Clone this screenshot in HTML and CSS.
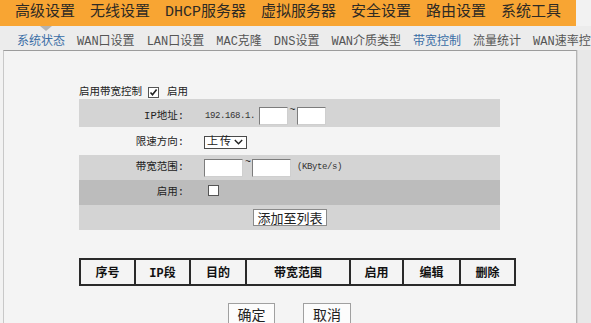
FILE: index.html
```html
<!DOCTYPE html>
<html>

<head>
	<meta charset="utf-8">
	<title>带宽控制</title>
	<link rel="stylesheet" href="styles.css">
</head>

<body>
	<nav class="topnav">
		<span class="topnav-item active">高级设置</span>
		<span class="topnav-item">无线设置</span>
		<span class="topnav-item">DHCP服务器</span>
		<span class="topnav-item">虚拟服务器</span>
		<span class="topnav-item">安全设置</span>
		<span class="topnav-item">路由设置</span>
		<span class="topnav-item">系统工具</span>
	</nav>

	<nav class="subnav">
		<span class="subnav-item active">系统状态</span>
		<span class="subnav-item">WAN口设置</span>
		<span class="subnav-item">LAN口设置</span>
		<span class="subnav-item">MAC克隆</span>
		<span class="subnav-item">DNS设置</span>
		<span class="subnav-item">WAN介质类型</span>
		<span class="subnav-item active">带宽控制</span>
		<span class="subnav-item">流量统计</span>
		<span class="subnav-item">WAN速率控</span>
	</nav>

	<div class="main">
		<div class="panel">
			<div class="form">
				<div class="enable-line">
					<span>启用带宽控制</span>
					<svg class="checkbox" width="11" height="11" viewBox="0 0 11 11">
						<rect x="0.5" y="0.5" width="10" height="10" fill="#fff" stroke="#555" />
						<path d="M2.5 5.5 L4.5 7.8 L8.6 2.6" fill="none" stroke="#222" stroke-width="1.6" />
					</svg>
					<span class="enable-text">启用</span>
				</div>

				<div class="row row-gray row-ip">
					<div class="row-label">IP地址:</div>
					<div class="row-value">
						<span class="mini-text ip-prefix">192.168.1.</span>
						<input class="text-input ip-input" type="text">
						<span class="tilde">~</span>
						<input class="text-input ip-input" type="text">
					</div>
				</div>

				<div class="row row-dir">
					<div class="row-label">限速方向:</div>
					<div class="row-value">
						<div class="select">
							<span class="select-text">上传</span>
							<svg width="9" height="6" viewBox="0 0 9 6">
								<path d="M0.8 1 L4.5 4.8 L8.2 1" fill="none" stroke="#222" stroke-width="1.4" />
							</svg>
						</div>
					</div>
				</div>

				<div class="row row-gray row-bw">
					<div class="row-label">带宽范围:</div>
					<div class="row-value">
						<input class="text-input bw-input" type="text">
						<span class="tilde">~</span>
						<input class="text-input bw-input" type="text">
						<span class="mini-text unit">(KByte/s)</span>
					</div>
				</div>

				<div class="row row-dark row-en">
					<div class="row-label">启用:</div>
					<div class="row-value">
						<span class="empty-box"></span>
					</div>
				</div>

				<div class="row row-gray row-add">
					<button class="add-button">添加至列表</button>
				</div>

				<table class="rule-table">
					<tr>
						<th class="col-no">序号</th>
						<th class="col-ip">IP段</th>
						<th class="col-dest">目的</th>
						<th class="col-bw">带宽范围</th>
						<th class="col-en">启用</th>
						<th class="col-edit">编辑</th>
						<th class="col-del">删除</th>
					</tr>
				</table>

				<div class="actions">
					<button class="action-button ok">确定</button>
					<button class="action-button cancel">取消</button>
				</div>
			</div>
		</div>
		<div class="side"></div>
	</div>
</body>

</html>
```

FILE: styles.css
```css
body {
  margin: 0;
  width: 591px;
  height: 323px;
  overflow: hidden;
  background-color: #f2f2f2;
  font-family: "Liberation Mono", "Noto Sans CJK SC", monospace;
  color: #222;
}

.topnav {
  display: flex;
  align-items: center;
  gap: 15px;
  width: 576px;
  height: 26px;
  padding-left: 15px;
  box-sizing: border-box;
  background-color: #f8a533;
  font-size: 15px;
  line-height: 18px;
  color: #2e2a24;
  white-space: nowrap;
}

.topnav-item.active {
  position: relative;
}
.topnav-item.active::after {
  content: "";
  position: absolute;
  left: 25px;
  top: 22px;
  border-left: 6px solid transparent;
  border-right: 6px solid transparent;
  border-top: 5px solid #b4b4b4;
}

.subnav {
  display: flex;
  gap: 12px;
  width: 591px;
  height: 24px;
  padding-top: 9px;
  padding-left: 17px;
  box-sizing: border-box;
  background-color: #ececec;
  font-size: 12px;
  line-height: 14px;
  color: #555;
  white-space: nowrap;
  overflow: hidden;
}

.subnav-item.active {
  color: #3b6ea6;
}

.main {
  display: flex;
  height: 273px;
}

.panel {
  width: 574px;
  margin-left: 3px;
  box-sizing: border-box;
  border-top: 1px solid #9c9c9c;
  border-left: 1px solid #c8c8c8;
  border-right: 1px solid #b6b6b6;
  background-color: #f4f4f4;
}

.side {
  flex: 1;
  border-left: 1px solid #d6d6d6;
  background-color: #e8e8e8;
}

.form {
  width: 421px;
  margin-left: 75px;
  padding-top: 35px;
}

.enable-line {
  display: flex;
  align-items: center;
  height: 13px;
  font-size: 10.5px;
  line-height: 13px;
}

.checkbox {
  margin-left: 6px;
}

.enable-text {
  margin-left: 8px;
}

.row {
  display: grid;
  grid-template-columns: 105px 1fr;
  column-gap: 21px;
  align-items: center;
  box-sizing: border-box;
  font-size: 10.5px;
  line-height: 13px;
}

.row-gray {
  background-color: #d4d4d4;
}

.row-dark {
  background-color: #bcbcbc;
}

.row-label {
  text-align: right;
  color: #222;
}

.row-value {
  display: flex;
  align-items: center;
}

.row-ip {
  height: 28px;
  padding-top: 6px;
}

.row-dir {
  height: 28px;
  padding-top: 2px;
}

.row-bw {
  height: 25px;
}

.row-en {
  height: 25px;
}

.row-add {
  height: 25px;
}

.mini-text {
  font-size: 9px;
  letter-spacing: -0.4px;
  color: #333;
  white-space: nowrap;
}

.ip-prefix {
  width: 54px;
}

.text-input {
  height: 18px;
  margin: 0;
  padding: 0;
  box-sizing: border-box;
  border-width: 1px;
  border-style: solid;
  border-color: #7c7c7c #cfcfcf #cfcfcf #7c7c7c;
  background-color: #fff;
}

.ip-input {
  width: 29px;
}
.bw-input {
  width: 39px;
  margin-left: -1px;
}

.tilde {
  align-self: flex-start;
  width: 9px;
  height: 10px;
  font-size: 10px;
  line-height: 8px;
  text-align: center;
}

.row-bw .tilde {
  width: 10px;
}

.unit {
  margin-left: 6px;
}

.select {
  display: flex;
  align-items: center;
  justify-content: space-between;
  width: 43px;
  height: 13px;
  margin-left: -1px;
  padding-inline: 2px 3px;
  box-sizing: border-box;
  border: 1px solid #4a4a4a;
  background-color: #fff;
}

.select-text {
  font-size: 11px;
  line-height: 11px;
  letter-spacing: 2px;
  white-space: nowrap;
}

.empty-box {
  width: 11px;
  height: 11px;
  margin-left: 3px;
  margin-bottom: 5px;
  box-sizing: border-box;
  border: 1px solid #555;
  background-color: #fff;
}

.add-button {
  grid-column: 1 / -1;
  justify-self: center;
  width: 74px;
  height: 17px;
  padding: 0;
  margin-left: 1px;
  border: 1px solid #8a8a8a;
  background-color: #fff;
  font-family: "Noto Sans CJK SC", sans-serif;
  font-size: 13px;
  line-height: 15px;
  color: #222;
}

.rule-table {
  width: 421px;
  margin-top: 28px;
  border-collapse: collapse;
  table-layout: fixed;
}

.rule-table th {
  height: 24px;
  padding: 0;
  border: 2px solid #2a2a2a;
  font-size: 12px;
  font-weight: bold;
  color: #111;
}

.col-no { width: 53px; }
.col-ip { width: 53px; }
.col-dest { width: 54px; }
.col-bw { width: 102px; }
.col-en { width: 51px; }
.col-edit { width: 55px; }
.col-del { width: 53px; }

.actions {
  display: flex;
  justify-content: center;
  gap: 28px;
  margin-top: 17px;
}

.action-button {
  height: 22px;
  padding: 0;
  border: 1px solid #a0a0a0;
  background-color: #fcfcfc;
  font-family: "Noto Sans CJK SC", sans-serif;
  font-size: 14px;
  line-height: 18px;
  color: #222;
}
.action-button.ok {
  width: 47px;
}
.action-button.cancel {
  width: 48px;
}
```
